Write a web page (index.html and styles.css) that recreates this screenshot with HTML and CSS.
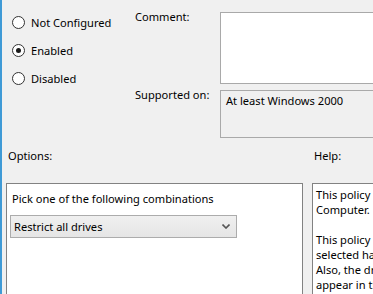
FILE: index.html
```html
<!DOCTYPE html>
<html>
<head>
<meta charset="utf-8">
<link rel="stylesheet" href="styles.css">
</head>
<body>
<div class="page">
  <div class="top">
    <div class="radios">
      <div class="radio-row"><span class="radio"></span><span>Not Configured</span></div>
      <div class="radio-row"><span class="radio checked"></span><span>Enabled</span></div>
      <div class="radio-row"><span class="radio"></span><span>Disabled</span></div>
    </div>
    <div class="fields">
      <div class="field comment-field">
        <div class="label">Comment:</div>
        <div class="comment-box"></div>
      </div>
      <div class="field supported-field">
        <div class="label">Supported on:</div>
        <div class="supported-box">At least Windows 2000</div>
      </div>
    </div>
  </div>
  <div class="headers">
    <div class="options-label">Options:</div>
    <div class="help-label">Help:</div>
  </div>
  <div class="panels">
    <div class="options-box">
      <div class="pick">Pick one of the following combinations</div>
      <div class="select">
        <span>Restrict all drives</span>
        <svg class="chev" width="8" height="5" viewBox="0 0 8 5"><path d="M0.5 0.5 L4 4 L7.5 0.5" fill="none" stroke="#555" stroke-width="1.6"/></svg>
      </div>
    </div>
    <div class="help-box">
      <div class="line">This policy setting allows you to hide these specified drives in My</div>
      <div class="line">Computer.</div>
      <div class="line">&nbsp;</div>
      <div class="line">This policy setting allows you to remove the icons representing</div>
      <div class="line">selected hard drives from My Computer and File Explorer.</div>
      <div class="line">Also, the drive letters representing the selected drives no longer</div>
      <div class="line">appear in the standard Open dialog box.</div>
    </div>
  </div>
</div>
</body>
</html>
```
FILE: styles.css
```css
html, body {
  margin: 0;
  padding: 0;
}
body {
  width: 373px;
  height: 294px;
  overflow: hidden;
  background: #f0f0f0;
  font-family: "Noto Sans", "Open Sans", sans-serif;
  font-size: 11.1px;
  color: #000;
}
.page {
  border-left: 2px solid #3f9ad6;
  height: 294px;
  box-sizing: border-box;
  display: flex;
  flex-direction: column;
}
.top {
  display: flex;
  height: 140px;
}
.radios {
  width: 133px;
  padding-top: 8px;
  padding-left: 10px;
  box-sizing: border-box;
}
.radio-row {
  height: 28px;
  display: flex;
  align-items: center;
  gap: 6px;
}
.radio {
  width: 11px;
  height: 11px;
  border: 1px solid #333;
  border-radius: 50%;
  background: #fff;
  position: relative;
  box-sizing: content-box;
}
.radio.checked::after {
  content: "";
  position: absolute;
  left: 3px;
  top: 3px;
  width: 5px;
  height: 5px;
  border-radius: 50%;
  background: #1a1a1a;
}
.fields {
  flex: 1;
  display: flex;
  flex-direction: column;
  padding-top: 12px;
}
.field {
  display: flex;
}
.label {
  width: 85px;
  margin-top: -3px;
  line-height: 16px;
}
.comment-box {
  flex: 1;
  height: 70px;
  background: #fff;
  border: 1px solid #a9a9a9;
  border-right: none;
}
.supported-field {
  margin-top: 6px;
}
.supported-box {
  flex: 1;
  height: 44px;
  border: 1px solid #a9a9a9;
  border-right: none;
  padding: 2px 0 0 5px;
  line-height: 16px;
}
.headers {
  display: flex;
  height: 43px;
  padding-top: 8px;
  box-sizing: border-box;
  line-height: 16px;
}
.options-label {
  width: 306px;
  padding-left: 6px;
}
.help-label {
  flex: 1;
}
.panels {
  flex: 1;
  display: flex;
  gap: 9px;
  padding-left: 4px;
}
.options-box {
  width: 297px;
  background: #fff;
  border: 1px solid #828282;
  border-bottom: none;
  box-sizing: border-box;
  padding: 7px 3px 0 3px;
}
.pick {
  line-height: 16px;
  padding-left: 2px;
}
.select {
  margin-top: 8px;
  width: 227px;
  height: 23px;
  box-sizing: border-box;
  border: 1px solid #acacac;
  background: linear-gradient(#f0f0f0, #e5e5e5);
  display: flex;
  align-items: center;
  justify-content: space-between;
  padding: 0 6px 0 3px;
}
.help-box {
  flex: 1;
  background: #fff;
  border: 1px solid #828282;
  border-right: none;
  border-bottom: none;
  padding: 3px 0 0 3px;
  white-space: nowrap;
  overflow: hidden;
  line-height: 15px;
}
```
